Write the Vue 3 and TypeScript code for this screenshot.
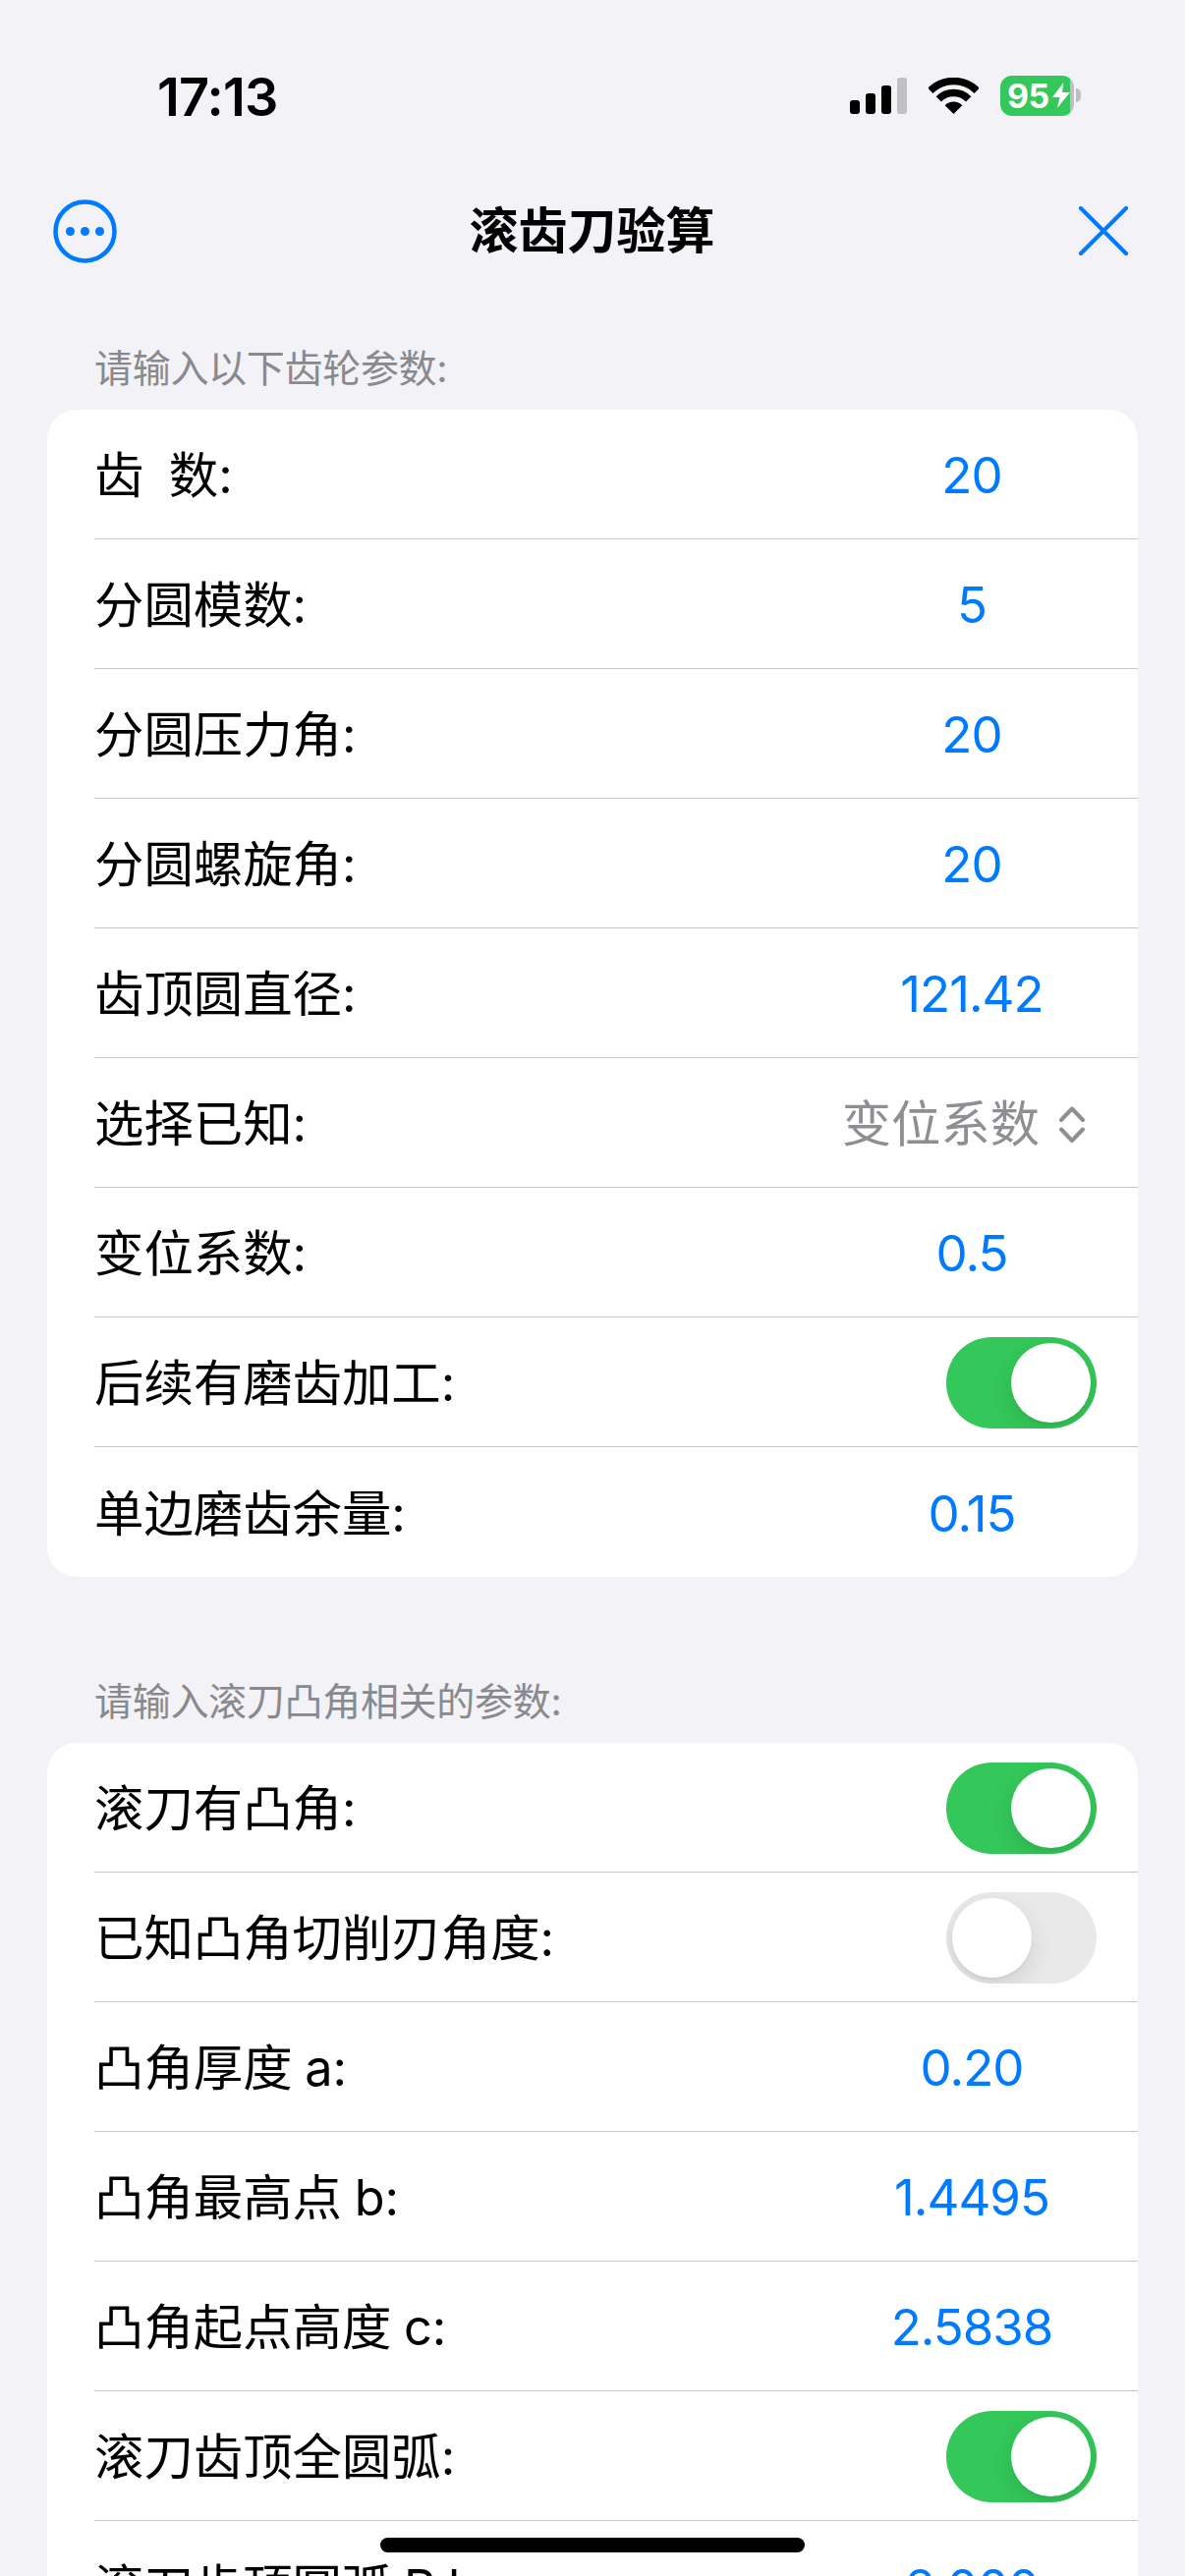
<script setup lang="ts">
type Row =
  | { label: string; kind: 'value'; value: string }
  | { label: string; kind: 'toggle'; on: boolean }
  | { label: string; kind: 'picker'; value: string }

interface Section {
  title: string
  rows: Row[]
}

const sections: Section[] = [
  {
    title: '请输入以下齿轮参数:',
    rows: [
      { label: '齿\u00a0\u00a0数:', kind: 'value', value: '20' },
      { label: '分圆模数:', kind: 'value', value: '5' },
      { label: '分圆压力角:', kind: 'value', value: '20' },
      { label: '分圆螺旋角:', kind: 'value', value: '20' },
      { label: '齿顶圆直径:', kind: 'value', value: '121.42' },
      { label: '选择已知:', kind: 'picker', value: '变位系数' },
      { label: '变位系数:', kind: 'value', value: '0.5' },
      { label: '后续有磨齿加工:', kind: 'toggle', on: true },
      { label: '单边磨齿余量:', kind: 'value', value: '0.15' },
    ],
  },
  {
    title: '请输入滚刀凸角相关的参数:',
    rows: [
      { label: '滚刀有凸角:', kind: 'toggle', on: true },
      { label: '已知凸角切削刃角度:', kind: 'toggle', on: false },
      { label: '凸角厚度 a:', kind: 'value', value: '0.20' },
      { label: '凸角最高点 b:', kind: 'value', value: '1.4495' },
      { label: '凸角起点高度 c:', kind: 'value', value: '2.5838' },
      { label: '滚刀齿顶全圆弧:', kind: 'toggle', on: true },
      { label: '滚刀齿顶圆弧 R k:', kind: 'value', value: '2.000' },
    ],
  },
]
</script>

<template>
  <div class="screen">
    <header class="status">
      <span class="time">17:13</span>
      <div class="indicators">
        <svg class="signal" width="58" height="37" viewBox="0 0 58 37">
          <rect x="0" y="23" width="10" height="14" rx="3" fill="#000" />
          <rect x="16" y="16" width="10" height="21" rx="3" fill="#000" />
          <rect x="32" y="8" width="10" height="29" rx="3" fill="#000" />
          <rect x="48" y="0" width="10" height="37" rx="3" fill="#c0c0c5" />
        </svg>
        <svg class="wifi" width="51" height="37" viewBox="0 0 51 37">
          <path d="M1.8 13.3A33.5 33.5 0 0 1 49.2 13.3" fill="none" stroke="#000" stroke-width="7.5" />
          <path d="M10.3 21.8A21.5 21.5 0 0 1 40.7 21.8" fill="none" stroke="#000" stroke-width="7.5" />
          <path d="M25.5 37L16.7 28.2A12.5 12.5 0 0 1 34.3 28.2Z" fill="#000" />
        </svg>
        <div class="battery">
          <span class="level">95</span>
          <svg class="bolt" width="18" height="26" viewBox="0 0 18 26">
            <path d="M11.5 0L0 15H7.5L5 26L18 10H10Z" fill="#fff" />
          </svg>
        </div>
      </div>
    </header>

    <nav class="nav">
      <svg class="more" width="65" height="65" viewBox="0 0 65 65">
        <circle cx="32.5" cy="32.5" r="30" fill="none" stroke="#007aff" stroke-width="4.5" />
        <circle cx="17.5" cy="32.5" r="4.5" fill="#007aff" />
        <circle cx="32.5" cy="32.5" r="4.5" fill="#007aff" />
        <circle cx="47.5" cy="32.5" r="4.5" fill="#007aff" />
      </svg>
      <h1 class="title">滚齿刀验算</h1>
      <svg class="close" width="50" height="50" viewBox="0 0 50 50">
        <path d="M2 2L48 48M48 2L2 48" fill="none" stroke="#007aff" stroke-width="4.2" stroke-linecap="round" />
      </svg>
    </nav>

    <main class="content">
      <section v-for="section in sections" :key="section.title" class="section">
        <h2 class="section-title">{{ section.title }}</h2>
        <div class="card">
          <div v-for="row in section.rows" :key="row.label" class="row">
            <span class="label">{{ row.label }}</span>
            <span v-if="row.kind === 'value'" class="value">{{ row.value }}</span>
            <span v-else-if="row.kind === 'picker'" class="picker">
              <span>{{ row.value }}</span>
              <svg width="26" height="39" viewBox="0 0 26 39">
                <path d="M2 15L13 3.5L24 15M2 24.5L13 36L24 24.5" fill="none" stroke="#8e8e93" stroke-width="4" stroke-linecap="round" stroke-linejoin="round" />
              </svg>
            </span>
            <span v-else class="toggle" :class="{ on: row.on }"><span class="knob"></span></span>
          </div>
        </div>
      </section>
    </main>

    <div class="home"></div>
  </div>
</template>

<style scoped>
.screen {
  position: relative;
  width: 1206px;
  height: 2622px;
  overflow: hidden;
  background: #f2f2f7;
  color: #000;
  font-family: Inter, "Noto Sans CJK SC", sans-serif;
}

.status {
  box-sizing: border-box;
  height: 138px;
  padding: 56px 106px 0 160px;
  display: flex;
  align-items: center;
  justify-content: space-between;
}

.time {
  padding-top: 3px;
  font-size: 54px;
  font-weight: 600;
  line-height: 79px;
  letter-spacing: -0.8px;
}

.indicators {
  display: flex;
  align-items: center;
  gap: 22px;
}

.battery {
  position: relative;
  box-sizing: border-box;
  width: 75px;
  height: 41px;
  margin-right: 7px;
  padding-left: 7px;
  border-radius: 12px;
  background: linear-gradient(90deg, #34c759 71px, #bdbdc2 71px);
  display: flex;
  align-items: center;
  gap: 3px;
  color: #fff;
}

.battery::after {
  content: "";
  position: absolute;
  right: -7px;
  top: 13px;
  width: 5px;
  height: 14px;
  border-radius: 0 7px 7px 0;
  background: #bdbdc2;
}

.level {
  font-size: 34px;
  font-weight: 700;
  line-height: 41px;
  letter-spacing: -0.5px;
}

.nav {
  box-sizing: border-box;
  height: 130px;
  margin-top: 32px;
  padding: 0 58px 0 54px;
  display: grid;
  grid-template-columns: 1fr auto 1fr;
  align-items: center;
}

.more {
  justify-self: start;
}

.close {
  justify-self: end;
}

.title {
  margin: 0;
  padding-left: 3px;
  font-size: 50px;
  font-weight: 600;
  line-height: 70px;
}

.content {
  padding: 33px 48px 0;
}

.section + .section {
  margin-top: 85px;
}

.section-title {
  margin: 0;
  height: 84px;
  padding-left: 48px;
  font-size: 39px;
  font-weight: 400;
  line-height: 84px;
  letter-spacing: -0.3px;
  color: #8a8a8e;
}

.card {
  background: #fff;
  border-radius: 30px;
  overflow: hidden;
}

.row {
  box-sizing: border-box;
  height: 132px;
  margin-left: 48px;
  padding-top: 3px;
  padding-right: 42px;
  display: flex;
  align-items: center;
  justify-content: space-between;
  border-bottom: 1px solid #c6c6c8;
}

.row:last-child {
  border-bottom: none;
}

.label {
  font-size: 50.4px;
  line-height: 70px;
  word-spacing: -1.5px;
  white-space: pre;
}

.value {
  width: 252px;
  margin-right: 1px;
  text-align: center;
  font-size: 51px;
  line-height: 70px;
  letter-spacing: -1px;
  color: #007aff;
}

.picker {
  display: flex;
  align-items: center;
  gap: 20px;
  padding-right: 12px;
  font-size: 50.3px;
  line-height: 70px;
  color: #8e8e93;
}

.toggle {
  position: relative;
  width: 153px;
  height: 93px;
  margin-top: -1px;
  border-radius: 47px;
  background: #e9e9ea;
  overflow: hidden;
}

.toggle.on {
  background: #34c759;
}

.knob {
  position: absolute;
  top: 6px;
  left: 6px;
  width: 81px;
  height: 81px;
  border-radius: 50%;
  background: #fff;
  box-shadow: 0 9px 24px rgba(0, 0, 0, 0.1), 0 3px 3px rgba(0, 0, 0, 0.04);
}

.toggle.on .knob {
  left: 66px;
}

.home {
  position: absolute;
  left: 387px;
  bottom: 24px;
  width: 432px;
  height: 15px;
  border-radius: 8px;
  background: #000;
}
</style>

<style>
html,
body {
  margin: 0;
  background: #f2f2f7;
}
</style>
